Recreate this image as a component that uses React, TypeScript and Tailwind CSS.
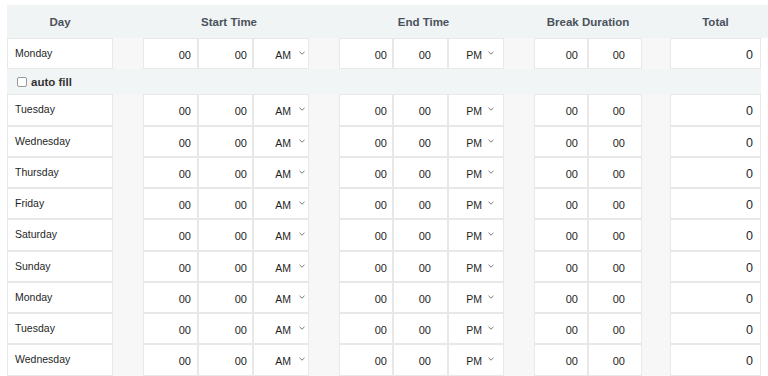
import React from "react";

const COLS =
  "grid grid-cols-[106px_30px_55px_55px_56px_30px_54px_55px_56px_30px_54px_54px_28px_91px]";

function Chevron() {
  return (
    <svg width="6" height="4" viewBox="0 0 6 4" className="mt-[2px]">
      <path d="M0.5 0.8 L3 3.2 L5.5 0.8" fill="none" stroke="#7a7a7a" strokeWidth="1" />
    </svg>
  );
}

function Num({ pr }: { pr: string }) {
  return (
    <div
      className={`flex justify-end border border-[#e8e8e8] bg-white pt-[10px] text-[11px] leading-[12px] text-[#1f1f1f] ${pr}`}
    >
      00
    </div>
  );
}

function Spacer() {
  return <div className="bg-[#f7f7f7]" />;
}

function Row({ day }: { day: string }) {
  return (
    <div className={`${COLS} h-[31.25px]`}>
      <div className="border border-[#e8e8e8] bg-white pl-[7px] pt-[8px] text-[10.5px] leading-[12px] text-[#1f1f1f]">
        {day}
      </div>
      <Spacer />
      <Num pr="pr-[6px]" />
      <Num pr="pr-[5px]" />
      <div className="flex justify-end border border-[#e8e8e8] bg-white pr-[3px] pt-[10px] text-[10.5px] leading-[12px] text-[#1f1f1f]">
        <span>AM</span>
        <span className="ml-[8px]">
          <Chevron />
        </span>
      </div>
      <Spacer />
      <Num pr="pr-[5px]" />
      <Num pr="pr-[16px]" />
      <div className="flex justify-end border border-[#e8e8e8] bg-white pr-[9px] pt-[10px] text-[10.5px] leading-[12px] text-[#1f1f1f]">
        <span>PM</span>
        <span className="ml-[6px]">
          <Chevron />
        </span>
      </div>
      <Spacer />
      <Num pr="pr-[9px]" />
      <Num pr="pr-[16px]" />
      <Spacer />
      <div className="flex justify-end border border-[#e8e8e8] bg-white pr-[7px] pt-[9px] text-[12.5px] leading-[14px] text-[#1f1f1f]">
        0
      </div>
    </div>
  );
}

export default function App() {
  const rest = [
    "Tuesday",
    "Wednesday",
    "Thursday",
    "Friday",
    "Saturday",
    "Sunday",
    "Monday",
    "Tuesday",
    "Wednesday",
  ];
  return (
    <div
      className="h-[376px] w-[768px] overflow-hidden bg-white pl-[7px] pt-[5px]"
      style={{ fontFamily: '"Liberation Sans", Arial, sans-serif' }}
    >
      <div className={`${COLS} h-[33px] bg-[#f1f4f5] pt-[3px] text-[11.5px] font-bold text-[#4a525c]`}>
        <div className="col-span-1 flex items-center justify-center">Day</div>
        <div />
        <div className="col-span-3 flex items-center justify-center pl-[6px]">Start Time</div>
        <div />
        <div className="col-span-3 flex items-center justify-center pl-[4px]">End Time</div>
        <div />
        <div className="col-span-2 flex items-center justify-center">Break Duration</div>
        <div />
        <div className="col-span-1 flex items-center justify-center">Total</div>
      </div>
      <Row day="Monday" />
      <div className="flex h-[25px] w-[754px] items-center bg-[#f2f5f6] pl-[10px]">
        <span className="box-border h-[10px] w-[10px] rounded-[2px] border border-[#999] bg-white" />
        <span className="ml-[4px] text-[11.5px] font-bold leading-[14px] text-[#333]">auto fill</span>
      </div>
      {rest.map((d, i) => (
        <Row key={i} day={d} />
      ))}
    </div>
  );
}
